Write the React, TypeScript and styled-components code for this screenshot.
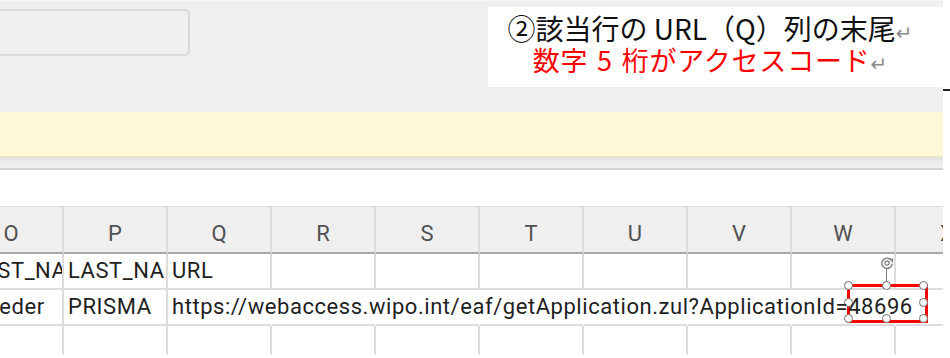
import styled, { createGlobalStyle } from 'styled-components';

const GlobalStyle = createGlobalStyle`
  html, body {
    margin: 0;
    padding: 0;
    background: #fff;
  }
  body {
    font-family: Roboto, "Noto Sans", sans-serif;
  }
`;

const COLUMNS = ['O', 'P', 'Q', 'R', 'S', 'T', 'U', 'V', 'W', 'X'];

const ROWS: string[][] = [
  ['FIRST_NAME', 'LAST_NAME', 'URL'],
  ['Kroeder', 'PRISMA', 'https://webaccess.wipo.int/eaf/getApplication.zul?ApplicationId=48696'],
  [],
];

const HANDLES = [
  [0, 0], [50, 0], [100, 0],
  [0, 50], [100, 50],
  [0, 100], [50, 100], [100, 100],
];

const App = () => {
  return (
    <>
      <GlobalStyle />
      <Frame>
        <TopBar>
          <SearchBox />
        </TopBar>
        <Notice />
        <Divider />
        <Gap />
        <Sheet>
          {COLUMNS.map((c) => (
            <HeadCell key={c}>{c}</HeadCell>
          ))}
          {ROWS.map((row, r) =>
            COLUMNS.map((c, i) => {
              const text = row[i] ?? '';
              const spill = r === 1 && i === 2;
              const covered = r === 1 && i >= 2;
              return (
                <Cell key={c + r} $last={r === ROWS.length - 1} $spill={spill} $covered={covered}>
                  {text}
                </Cell>
              );
            })
          )}
        </Sheet>

        <Callout>
          <CalloutLine>
            ②該当行の URL（Q）列の末尾<Mark>↵</Mark>
          </CalloutLine>
          <CalloutLine $red>
            数字 5 桁がアクセスコード<Mark>↵</Mark>
          </CalloutLine>
        </Callout>

        <Selection>
          <RotateStem />
          <RotateIcon viewBox="0 0 16 16">
            <path d="M12.2 5.2 A5.2 5.2 0 1 0 13.2 8.6" fill="none" stroke="#7a7a7a" strokeWidth="1.4" />
            <path d="M10.4 4.6 L13.6 4.2 L13 7.4" fill="none" stroke="#7a7a7a" strokeWidth="1.4" />
            <circle cx="8" cy="8" r="2.2" fill="none" stroke="#7a7a7a" strokeWidth="1.2" />
          </RotateIcon>
          {HANDLES.map(([x, y]) => (
            <Handle key={`${x}-${y}`} style={{ left: `${x}%`, top: `${y}%` }} />
          ))}
        </Selection>
      </Frame>
      <EdgeTick />
    </>
  );
};

const Frame = styled.div`
  position: relative;
  width: 943px;
  height: 358px;
  overflow: hidden;
  background: #fff;
`;

const TopBar = styled.div`
  height: 112px;
  box-sizing: border-box;
  padding-top: 8px;
  background: #efefef;
  border-top: 1px solid #f7f7f7;
`;

const SearchBox = styled.div`
  width: 232px;
  height: 47px;
  margin-left: -42px;
  box-sizing: border-box;
  border: 2px solid #d9d9d9;
  border-radius: 5px;
  background: #efefef;
`;

const Notice = styled.div`
  height: 44px;
  background: #fef8d6;
  border-bottom: 1px solid #ece6c6;
`;

const Divider = styled.div`
  height: 11px;
  background: linear-gradient(#dedede, #ededed 45%, #efefef);
  border-bottom: 2px solid #d3d3d3;
`;

const Gap = styled.div`
  height: 36px;
`;

const Sheet = styled.div`
  display: grid;
  grid-template-columns: repeat(10, 104px);
  margin-left: -40px;
  font-size: 22px;
  letter-spacing: 0.55px;
  color: #1f1f1f;
`;

const HeadCell = styled.div`
  height: 48px;
  box-sizing: border-box;
  display: flex;
  align-items: center;
  justify-content: center;
  padding-top: 8px;
  background: #efefef;
  border-top: 1px solid #dedede;
  border-right: 2px solid #dcdcdc;
  border-bottom: 2px solid #a9a9a9;
  color: #505050;
  font-size: 22px;
  letter-spacing: 0;
`;

const Cell = styled.div<{ $last?: boolean; $spill?: boolean; $covered?: boolean }>`
  position: relative;
  z-index: ${(p) => (p.$spill ? 1 : 0)};
  height: ${(p) => (p.$last ? '29px' : '36px')};
  box-sizing: border-box;
  padding: 0 4px;
  line-height: 34px;
  white-space: nowrap;
  overflow: ${(p) => (p.$spill ? 'visible' : 'hidden')};
  border-right: 2px solid ${(p) => (p.$covered ? 'transparent' : '#dcdcdc')};
  border-bottom: ${(p) => (p.$last ? 'none' : '2px solid #dcdcdc')};
`;

const Callout = styled.div`
  position: absolute;
  left: 488px;
  top: 7px;
  width: 455px;
  height: 80px;
  box-sizing: border-box;
  padding: 6px 11px 0 0;
  background: #fff;
  font-family: "Noto Sans CJK JP", "Noto Sans", sans-serif;
  text-align: center;
`;

const CalloutLine = styled.div<{ $red?: boolean }>`
  height: 31px;
  font-size: ${(p) => (p.$red ? '27px' : '28px')};
  line-height: 31px;
  letter-spacing: ${(p) => (p.$red ? '0.8px' : '0')};
  word-spacing: ${(p) => (p.$red ? '2px' : '0')};
  color: ${(p) => (p.$red ? '#ff0000' : '#111')};
  white-space: nowrap;
`;

const Mark = styled.span`
  font-family: "DejaVu Sans", sans-serif;
  font-size: 20px;
  line-height: 1;
  letter-spacing: 0;
  color: #8a8a8a;
`;

const Selection = styled.div`
  position: absolute;
  left: 847px;
  top: 284px;
  width: 81px;
  height: 39px;
  box-sizing: border-box;
  border: 3px solid #ff0000;
`;

const Handle = styled.span`
  position: absolute;
  width: 9px;
  height: 9px;
  margin: -6px 0 0 -6px;
  box-sizing: border-box;
  border: 1px solid #6f6f6f;
  border-radius: 50%;
  background: #fff;
`;

const RotateStem = styled.span`
  position: absolute;
  left: 50%;
  top: -19px;
  width: 1px;
  height: 16px;
  margin-left: -2px;
  background: #7a7a7a;
`;

const RotateIcon = styled.svg`
  position: absolute;
  left: 50%;
  top: -32px;
  width: 16px;
  height: 16px;
  margin-left: -9px;
`;

const EdgeTick = styled.div`
  position: absolute;
  left: 943px;
  top: 89px;
  width: 7px;
  height: 2px;
  background: #222;
`;

export default App;
